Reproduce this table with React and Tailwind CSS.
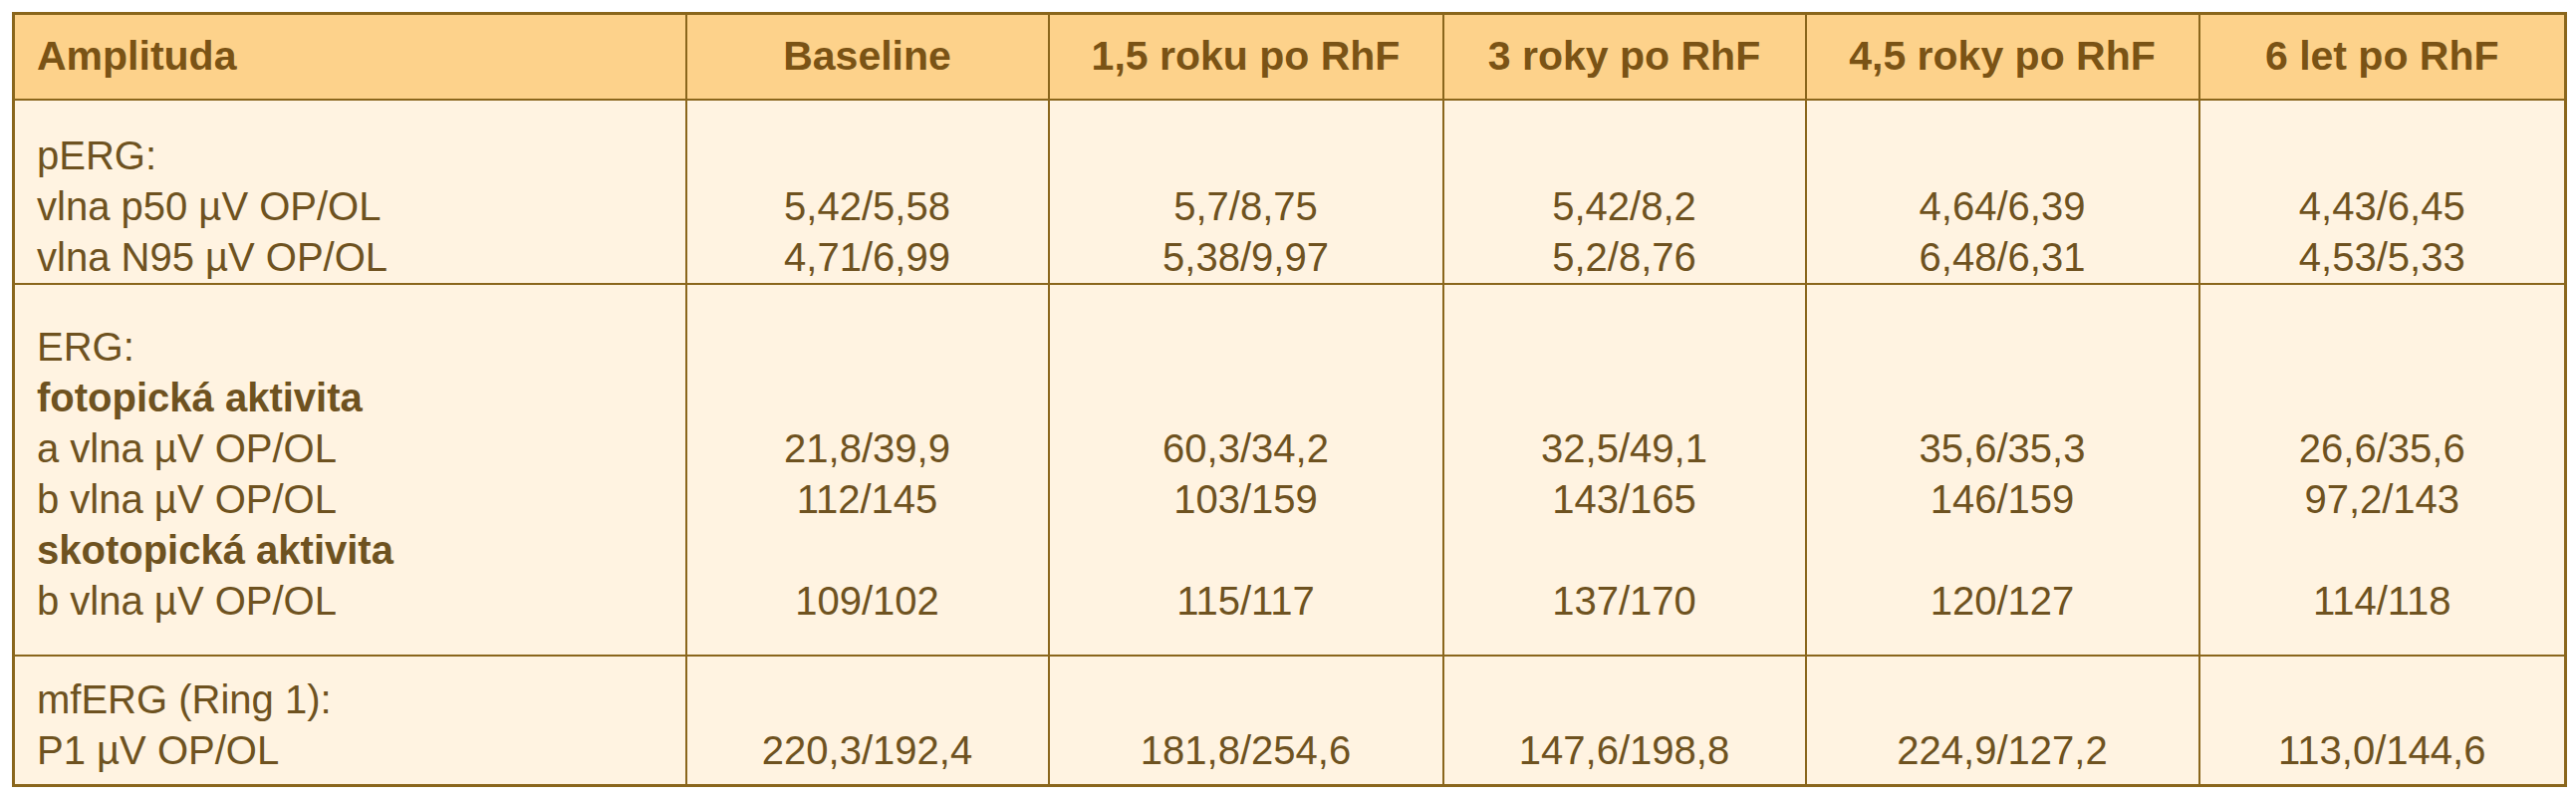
const columns = ["Baseline", "1,5 roku po RhF", "3 roky po RhF", "4,5 roky po RhF", "6 let po RhF"];

// each section: label lines (bold flag) and value lines per column
const sections = [
  {
    pad: "pt-[30px] pb-0",
    labels: [
      { text: "pERG:" },
      { text: "vlna p50 µV OP/OL" },
      { text: "vlna N95 µV OP/OL" },
    ],
    values: [
      ["", "5,42/5,58", "4,71/6,99"],
      ["", "5,7/8,75", "5,38/9,97"],
      ["", "5,42/8,2", "5,2/8,76"],
      ["", "4,64/6,39", "6,48/6,31"],
      ["", "4,43/6,45", "4,53/5,33"],
    ],
  },
  {
    pad: "pt-[37px] pb-[28px]",
    labels: [
      { text: "ERG:" },
      { text: "fotopická aktivita", bold: true },
      { text: "a vlna µV OP/OL" },
      { text: "b vlna µV OP/OL" },
      { text: "skotopická aktivita", bold: true },
      { text: "b vlna µV OP/OL" },
    ],
    values: [
      ["", "", "21,8/39,9", "112/145", "", "109/102"],
      ["", "", "60,3/34,2", "103/159", "", "115/117"],
      ["", "", "32,5/49,1", "143/165", "", "137/170"],
      ["", "", "35,6/35,3", "146/159", "", "120/127"],
      ["", "", "26,6/35,6", "97,2/143", "", "114/118"],
    ],
  },
  {
    pad: "pt-[18px] pb-[8px]",
    labels: [{ text: "mfERG (Ring 1):" }, { text: "P1 µV OP/OL" }],
    values: [
      ["", "220,3/192,4"],
      ["", "181,8/254,6"],
      ["", "147,6/198,8"],
      ["", "224,9/127,2"],
      ["", "113,0/144,6"],
    ],
  },
];

const Line = ({ children, bold }) => (
  <div className={`h-[51px] whitespace-nowrap ${bold ? "font-bold" : ""}`}>{children || "\u00a0"}</div>
);

export default function App() {
  return (
    <div className="min-h-[800px] bg-white pl-[12px] pt-[12px] font-['Liberation_Sans',Arial,sans-serif]">
      <table className="w-[2562px] table-fixed border-collapse border-[3px] border-[#8a661c]">
        <colgroup>
          <col className="w-[675px]" />
          <col className="w-[364px]" />
          <col className="w-[396px]" />
          <col className="w-[364px]" />
          <col className="w-[395px]" />
          <col className="w-[368px]" />
        </colgroup>
        <thead>
          <tr className="h-[86px] bg-[#fdd28b] text-[41px] font-bold text-[#7a5315]">
            <th className="border-2 border-[#8a661c] pl-[22px] text-left align-middle">Amplituda</th>
            {columns.map((c) => (
              <th key={c} className="border-2 border-[#8a661c] text-center align-middle">
                {c}
              </th>
            ))}
          </tr>
        </thead>
        <tbody className="bg-[#fff3e1] text-[40px] leading-[51px] text-[#6e5220]">
          {sections.map((s, i) => (
            <tr key={i}>
              <td className={`border-2 border-[#8a661c] pl-[22px] align-top ${s.pad}`}>
                {s.labels.map((l, j) => (
                  <Line key={j} bold={l.bold}>
                    {l.text}
                  </Line>
                ))}
              </td>
              {s.values.map((col, k) => (
                <td key={k} className={`border-2 border-[#8a661c] text-center align-top ${s.pad}`}>
                  {col.map((v, j) => (
                    <Line key={j}>{v}</Line>
                  ))}
                </td>
              ))}
            </tr>
          ))}
        </tbody>
      </table>
    </div>
  );
}
